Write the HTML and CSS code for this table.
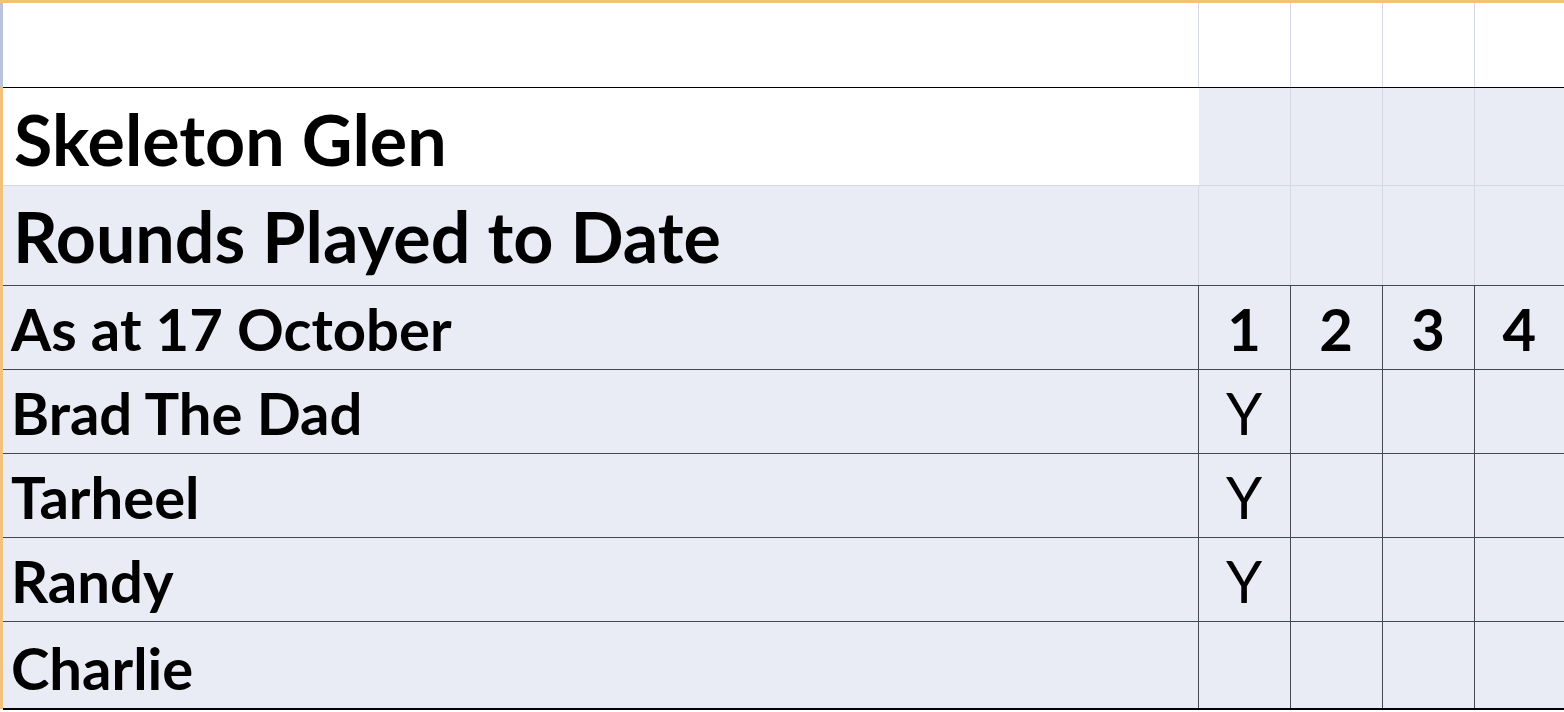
FILE: index.html
```html
<!DOCTYPE html>
<html>
<head>
<meta charset="utf-8">
<link rel="stylesheet" href="styles.css">
</head>
<body>
<div class="sheet">
  <table class="grid">
    <colgroup>
      <col class="c-name"><col class="c-r"><col class="c-r"><col class="c-r"><col class="c-last">
    </colgroup>
    <tr class="r-top">
      <td class="white"></td><td class="white gl"></td><td class="white gl"></td><td class="white gl"></td><td class="white gl"></td>
    </tr>
    <tr class="r-title">
      <td class="white title t1">Skeleton Glen</td><td class="gl"></td><td class="gl"></td><td class="gl"></td><td class="gl"></td>
    </tr>
    <tr class="r-sub">
      <td class="title t2">Rounds Played to Date</td><td class="gl"></td><td class="gl"></td><td class="gl"></td><td class="gl"></td>
    </tr>
    <tr class="r-row">
      <td class="name">As at 17 October</td><td class="num">1</td><td class="num">2</td><td class="num">3</td><td class="num">4</td>
    </tr>
    <tr class="r-row">
      <td class="name">Brad The Dad</td><td class="yes">Y</td><td></td><td></td><td></td>
    </tr>
    <tr class="r-row">
      <td class="name">Tarheel</td><td class="yes">Y</td><td></td><td></td><td></td>
    </tr>
    <tr class="r-row">
      <td class="name">Randy</td><td class="yes">Y</td><td></td><td></td><td></td>
    </tr>
    <tr class="r-row r-last">
      <td class="name">Charlie</td><td></td><td></td><td></td><td></td>
    </tr>
  </table>
</div>
</body>
</html>
```

FILE: styles.css
```css
html, body {
  margin: 0;
  padding: 0;
  background: #ffffff;
}
body {
  width: 1564px;
  height: 712px;
  overflow: hidden;
  font-family: "Lato", "Open Sans", sans-serif;
  color: #000;
}
.sheet {
  border-top: 3px solid #f2c27a;
  padding-left: 3px;
  background: linear-gradient(to bottom, #b9c4da 0, #b9c4da 84px, #f2c27a 84px) no-repeat left top / 3px 100%;
  height: 709px;
  box-sizing: border-box;
}
.grid {
  border-collapse: collapse;
  table-layout: fixed;
  width: 1561px;
}
.c-name { width: 1195px; }
.c-r { width: 92px; }
.c-last { width: 90px; }
.grid td {
  padding: 0;
  background: #e9ebf5;
  border: 1px solid #434852;
  box-sizing: border-box;
  vertical-align: bottom;
}
.grid td.white { background: #ffffff; }
.grid td.gl { border: 1px solid #d3d8e4; }
.r-top td { height: 84px; border-top: none; border-bottom: 1px solid #000; }
.r-top td:first-child { border-left: none; border-right: 1px solid #d3d8e4; }
.r-top td.gl { border-top: none; border-bottom: 1px solid #000; }
.r-title td { height: 98px; border-top: 1px solid #000; }
.r-title td.gl { border-top: 1px solid #000; }
.r-title td:first-child { border-left: none; border-right: 1px solid #ffffff; border-bottom: 1px solid #d3d8e4; }
.r-sub td { height: 100px; }
.r-sub td:first-child { border-left: none; border-right: 1px solid #d3d8e4; border-top: 1px solid #d3d8e4; border-bottom: 1px solid #434852; }
.r-sub td.gl { border-bottom: 1px solid #434852; }
.r-row td { height: 84px; }
.r-row td:first-child { border-left: none; }
.r-row td:last-child { border-right: none; }
.r-last td { border-bottom: 2px solid #000; height: 88px; }
.title {
  font-weight: 700;
  font-size: 70px;
  line-height: 1;
  padding-left: 11px !important;
  white-space: nowrap;
}
.t1 { padding-bottom: 11px !important; }
.t2 { padding-bottom: 14px !important; padding-left: 10px !important; }
.name {
  font-weight: 700;
  font-size: 58px;
  line-height: 1;
  padding-left: 8px !important;
  padding-bottom: 11px !important;
  white-space: nowrap;
}
.name-wide { letter-spacing: 0.3px; }
.num {
  font-weight: 700;
  font-size: 58px;
  line-height: 1;
  text-align: center;
  padding-bottom: 11px !important;
}
.yes {
  font-weight: 400;
  font-size: 58px;
  line-height: 1;
  text-align: center;
  padding-bottom: 11px !important;
}
```
